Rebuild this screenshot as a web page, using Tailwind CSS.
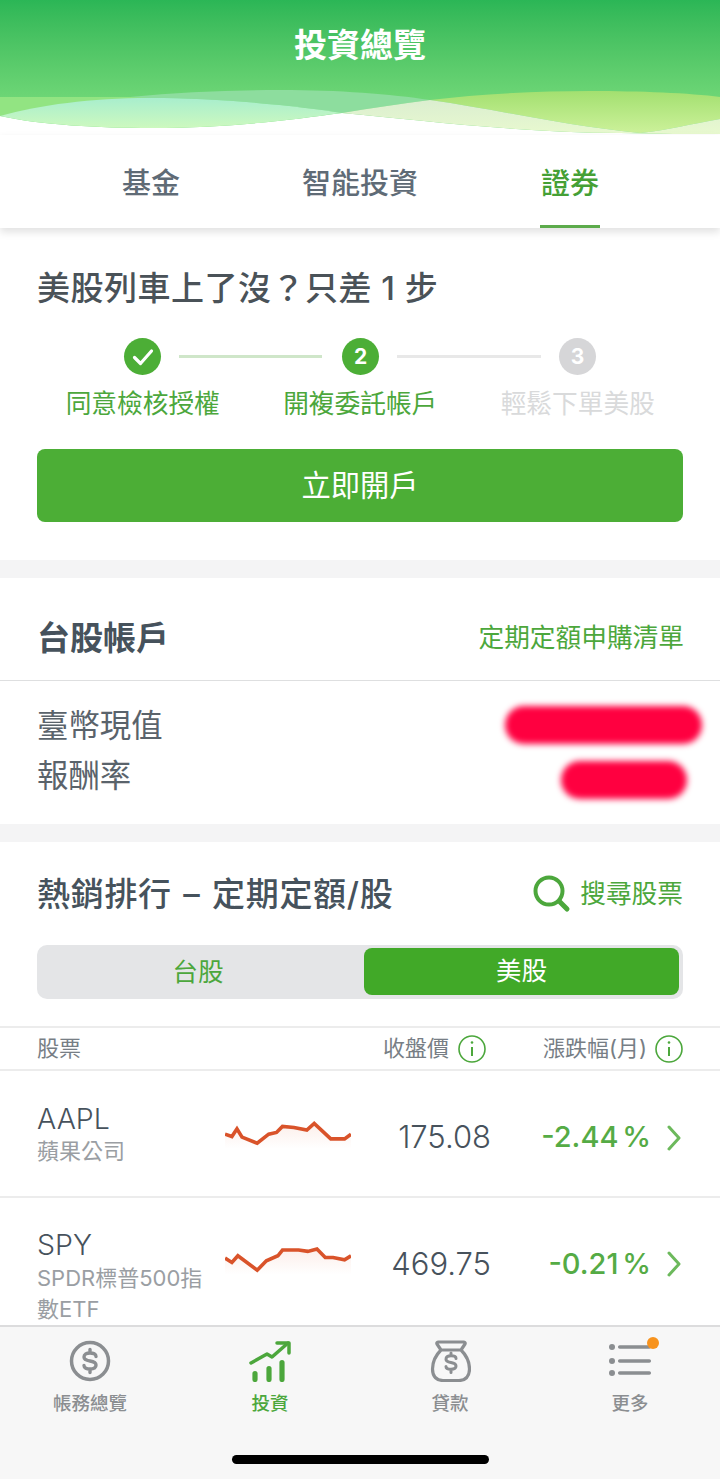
<!DOCTYPE html>
<html lang="zh-Hant">
<head>
<meta charset="utf-8">
<title>投資總覽</title>
<script src="https://cdn.jsdelivr.net/npm/@tailwindcss/browser@4"></script>
</head>
<body class="bg-white">
<div class="w-[720px] h-[1479px] flex flex-col overflow-hidden bg-white font-['Inter','Noto_Sans_CJK_TC',sans-serif] text-[#4a5560]">
  <main class="h-[1325px] shrink-0 overflow-hidden">
    <header class="relative h-[135px] bg-linear-to-b from-[#2bb656] to-[#6fd777] to-75%">
      <svg class="absolute inset-0" width="720" height="135" viewBox="0 0 720 135">
        <defs>
          <linearGradient id="lw" x1="0" y1="0" x2="0" y2="1"><stop offset="0" stop-color="#a8eecd"/><stop offset="1" stop-color="#cdf9bf"/></linearGradient>
          <linearGradient id="lm" x1="0" y1="0" x2="0" y2="1"><stop offset="0" stop-color="#a3e070"/><stop offset="1" stop-color="#ccf19a"/></linearGradient>
          <linearGradient id="lp" x1="0" y1="0" x2="0" y2="1"><stop offset="0" stop-color="#dbeed0"/><stop offset="1" stop-color="#e8f9cf"/></linearGradient>
        </defs>
        <path fill="#fff" d="M0 116C40 125 100 128 151 128C230 128 290 120 342 113C420 120 520 133 620 133C660 134 690 134 720 134V135H0Z"/>
        <path fill="#92e482" d="M0 97H170L0 116Z"/>
        <path fill="#8ddd9e" d="M130 97C180 92 230 90 280 90C340 90 390 94 430 100C400 104 370 108 342 113C300 106 220 98 150 98Z"/>
        <path fill="url(#lw)" d="M0 116C40 105 90 98 150 98C220 98 300 106 342 113C290 120 230 128 151 128C100 128 40 125 0 116Z"/>
        <path fill="url(#lm)" d="M430 100C480 94 540 91 590 91C640 91 690 93 720 97V119C690 124 670 130 640 133C560 125 500 110 430 100Z"/>
        <path fill="url(#lp)" d="M342 113C370 108 400 104 430 100C500 110 560 125 640 133C670 130 690 124 720 119V134C690 134 660 134 620 133C520 133 420 120 342 113Z"/>
      </svg>
      <h1 class="relative h-[91px] flex items-center justify-center text-[33px] font-bold text-white">投資總覽</h1>
    </header>

    <nav class="relative z-10 h-[93px] grid grid-cols-[300px_120px_300px] bg-white text-[29px] font-medium text-[#5f6b76] shadow-[0_4px_8px_rgba(0,0,0,0.12)]">
      <div class="flex items-center justify-center pt-[5px]"><span class="ml-[2px]">基金</span></div>
      <div class="flex items-center justify-center pt-[5px] whitespace-nowrap">智能投資</div>
      <div class="relative flex items-center justify-center pt-[5px] text-[#45a035]"><span>證券</span><span class="absolute left-[120px] bottom-0 w-[60px] h-[3px] bg-[#5cab4b]"></span></div>
    </nav>

    <section class="h-[332px] px-[37px] bg-white">
      <h2 class="h-[120px] pt-[1px] flex items-center text-[33px] font-medium text-[#4a5258] tracking-[0.5px] whitespace-nowrap">美股列車上了沒？只差 1 步</h2>
      <div class="flex items-center ml-[87px] h-[37px] -mt-[10px]">
        <span class="w-[37px] h-[37px] rounded-full bg-[#4cae36] flex items-center justify-center">
          <svg width="24" height="24" viewBox="0 0 24 24" fill="none" stroke="#fff" stroke-width="3.2" stroke-linecap="round" stroke-linejoin="round"><path d="M3.5 12.5L9.5 18.5L20.5 6"/></svg>
        </span>
        <span class="ml-[18px] w-[143px] h-[3px] bg-[#cfe6c9]"></span>
        <span class="ml-[20px] w-[37px] h-[37px] rounded-full bg-[#4cae36] flex items-center justify-center text-white text-[21px] font-bold">2</span>
        <span class="ml-[18px] w-[144px] h-[3px] bg-[#e8e8e8]"></span>
        <span class="ml-[18px] w-[37px] h-[37px] rounded-full bg-[#d6d6d8] flex items-center justify-center text-white text-[21px] font-bold">3</span>
      </div>
      <div class="grid grid-cols-[217.5px_217.5px_217.5px] -ml-[3px] mt-[10px] text-[25.7px] leading-[38px] text-center whitespace-nowrap">
        <span class="text-[#4ca73c]">同意檢核授權</span>
        <span class="text-[#4ca73c]">開複委託帳戶</span>
        <span class="text-[#d9dadb]">輕鬆下單美股</span>
      </div>
      <button class="mt-[26px] w-[646px] h-[73px] rounded-[8px] bg-[#4cae36] text-white text-[29.3px] font-normal">立即開戶</button>
    </section>

    <div class="h-[18px] bg-[#f4f4f5]"></div>

    <section class="bg-white">
      <div class="h-[103px] pl-[37px] pr-[36px] pt-[19px] flex items-center justify-between border-b border-[#dedfe0]">
        <h2 class="text-[33px] font-bold text-[#46525c]">台股帳戶</h2>
        <a class="text-[25.7px] text-[#4ca73c] whitespace-nowrap">定期定額申購清單</a>
      </div>
      <div class="h-[143px] pl-[37px] pr-[18px] pt-[20px] text-[31.4px] text-[#5a636b]">
        <div class="h-[50px] flex items-center justify-between"><span class="pt-[2px]">臺幣現值</span><span class="w-[197px] h-[38px] -mt-[2px] rounded-full bg-[#ff0040] blur-[3px]"></span></div>
        <div class="h-[50px] flex items-center justify-between"><span class="pt-[1px]">報酬率</span><span class="w-[126px] h-[38px] mt-[8px] mr-[15px] rounded-full bg-[#ff0040] blur-[3px]"></span></div>
      </div>
    </section>

    <div class="h-[18px] bg-[#f4f4f5]"></div>

    <section class="bg-white">
      <div class="h-[103px] pl-[37px] pr-[37px] pt-[2px] flex items-center justify-between">
        <h2 class="text-[33px] font-medium text-[#46525c] tracking-[0.7px] [word-spacing:2px] whitespace-nowrap">熱銷排行 – 定期定額/股</h2>
        <a class="flex items-center text-[25.7px] text-[#4ca73c]">
          <svg class="mr-[7px]" width="40" height="40" viewBox="0 0 40 40" fill="none" stroke="#4ca73c" stroke-width="4" stroke-linecap="round"><circle cx="16" cy="16" r="13.5"/><path stroke-width="5" d="M27 27L34 34"/></svg>
          搜尋股票
        </a>
      </div>
      <div class="mx-[37px] h-[54px] rounded-[10px] bg-[#e4e5e7] flex items-center text-[25.5px]">
        <span class="w-[322px] pt-[1px] text-center text-[#4ca73c]">台股</span>
        <span class="ml-[5px] w-[315px] h-[47px] -mt-[2px] rounded-[8px] bg-[#41a928] flex items-center justify-center pt-[1px] text-white">美股</span>
      </div>
      <div class="mt-[27px] h-[45px] pl-[37px] flex items-center border-y-2 border-[#ececec] text-[22px] text-[#777e85] whitespace-nowrap">
        <span class="w-[346px]">股票</span>
        <span>收盤價</span>
        <svg class="ml-[9px]" width="28" height="28" viewBox="0 0 28 28" fill="none" stroke="#4ca73c" stroke-width="1.6"><circle cx="14" cy="14" r="13"/><path d="M14 12V21" stroke-width="2"/><circle cx="14" cy="7.5" r="1.3" fill="#4ca73c" stroke="none"/></svg>
        <span class="ml-[57px]">漲跌幅(月)</span>
        <svg class="ml-[8px]" width="28" height="28" viewBox="0 0 28 28" fill="none" stroke="#4ca73c" stroke-width="1.6"><circle cx="14" cy="14" r="13"/><path d="M14 12V21" stroke-width="2"/><circle cx="14" cy="7.5" r="1.3" fill="#4ca73c" stroke="none"/></svg>
      </div>

      <div class="h-[127px] pl-[37px] flex border-b-2 border-[#ececec]">
        <div class="w-[188px] pt-[30px]">
          <div class="text-[28.5px] leading-[36px] font-light text-[#47525c]">AAPL</div>
          <div class="text-[22px] leading-[28px] text-[#9a9ea3]">蘋果公司</div>
        </div>
        <svg class="mt-[47px] shrink-0" width="126" height="37" viewBox="490 290 274 110" preserveAspectRatio="none">
          <defs><linearGradient id="fa" x1="0" y1="0" x2="0" y2="1"><stop offset="0" stop-color="#e2572a" stop-opacity=".1"/><stop offset=".8" stop-color="#e2572a" stop-opacity="0"/></linearGradient></defs>
          <path fill="url(#fa)" d="M490 338L505 345L516 322L527 347L560 365L585 338L602 333L615 315L640 318L668 326L684 306L720 352L750 352L764 338V400H490Z"/>
          <path fill="none" stroke="#d9532a" stroke-width="3.6" vector-effect="non-scaling-stroke" d="M490 338L505 345L516 322L527 347L560 365L585 338L602 333L615 315L640 318L668 326L684 306L720 352L750 352L764 338"/>
        </svg>
        <div class="w-[140px] h-[125px] pt-[8px] flex items-center justify-end text-[31px] font-light text-[#47525c]">175.08</div>
        <div class="w-[160px] h-[125px] pt-[6px] flex items-center justify-end text-[29px] font-medium text-[#55ab45] whitespace-nowrap [word-spacing:-4px]">-2.44 %</div>
        <svg class="ml-[16px] mt-[54px]" width="14" height="26" viewBox="0 0 14 26" fill="none" stroke="#6cb95c" stroke-width="3" stroke-linecap="round" stroke-linejoin="round"><path d="M2 2L12 13L2 24"/></svg>
      </div>

      <div class="h-[129px] pl-[37px] flex overflow-hidden">
        <div class="w-[188px] pt-[29px]">
          <div class="text-[28.5px] leading-[36px] font-light text-[#47525c]">SPY</div>
          <div class="w-[170px] text-[22px] leading-[31px] text-[#9a9ea3]">SPDR標普500指數ETF</div>
        </div>
        <svg class="mt-[46px] shrink-0" width="126" height="37" viewBox="490 670 274 110" preserveAspectRatio="none">
          <defs><linearGradient id="fb" x1="0" y1="0" x2="0" y2="1"><stop offset="0" stop-color="#e2572a" stop-opacity=".1"/><stop offset=".8" stop-color="#e2572a" stop-opacity="0"/></linearGradient></defs>
          <path fill="url(#fb)" d="M490 712L505 725L518 705L560 748L580 720L605 705L615 688L650 688L670 692L690 685L708 710L725 710L750 717L764 705V780H490Z"/>
          <path fill="none" stroke="#d9532a" stroke-width="3.6" vector-effect="non-scaling-stroke" d="M490 712L505 725L518 705L560 748L580 720L605 705L615 688L650 688L670 692L690 685L708 710L725 710L750 717L764 705"/>
        </svg>
        <div class="w-[140px] h-[125px] pt-[8px] flex items-center justify-end text-[31px] font-light text-[#47525c]">469.75</div>
        <div class="w-[160px] h-[125px] pt-[7px] flex items-center justify-end text-[29px] font-medium text-[#55ab45] whitespace-nowrap [word-spacing:-4px]">-0.21 %</div>
        <svg class="ml-[16px] mt-[53px]" width="14" height="26" viewBox="0 0 14 26" fill="none" stroke="#6cb95c" stroke-width="3" stroke-linecap="round" stroke-linejoin="round"><path d="M2 2L12 13L2 24"/></svg>
      </div>
    </section>
  </main>

  <footer class="relative h-[154px] shrink-0 bg-[#f7f7f7] border-t-2 border-[#dcdcdd]">
    <div class="grid grid-cols-4 text-[18.5px] font-medium text-[#8b8e91] text-center">
      <a class="flex flex-col items-center pt-[13px]">
        <svg width="42" height="42" viewBox="0 0 42 42" fill="none" stroke="#8b8e91"><circle cx="21" cy="21" r="18.5" stroke-width="3.5"/><path stroke-width="3.4" stroke-linecap="round" d="M27 16.5C27 14 24.5 13 21 13C17.5 13 15 14.2 15 17C15 23 27 19 27 25C27 28 24.5 29 21 29C17.5 29 15 28 15 25.5M21 9.5V13M21 29V32.5"/></svg>
        <span class="mt-[7px] leading-[28px]">帳務總覽</span>
      </a>
      <a class="flex flex-col items-center pt-[13px] text-[#4ca73c]">
        <svg width="42" height="42" viewBox="0 0 42 42" fill="none" stroke="#4ca73c" stroke-linecap="round" stroke-linejoin="round"><path stroke-width="3.5" d="M2 23L18 14L23 17L39 3"/><path stroke-width="3.5" d="M28 3H40V13"/><path stroke-width="5.2" d="M6 33.5V39.5M20 28.5V39.5M33 22.5V39.5"/></svg>
        <span class="mt-[7px] leading-[28px]">投資</span>
      </a>
      <a class="flex flex-col items-center pt-[13px]">
        <svg width="42" height="42" viewBox="0 0 42 42" fill="none" stroke="#8b8e91" stroke-linejoin="round"><path stroke-width="3.2" d="M9 2H35C36 2 36.5 3 36 4L32 10C37 15 40.5 21 40.5 29C40.5 37 36 40.5 30 40.5H14C8 40.5 3.5 37 3.5 29C3.5 21 7 15 12 10L8 4C7.5 3 8 2 9 2ZM12 10H32"/><path stroke-width="3" stroke-linecap="round" d="M27 18.5C27 16.5 25 15.8 22 15.8C19 15.8 17 16.8 17 19.2C17 24 27 21 27 26C27 28.5 25 29.2 22 29.2C19 29.2 17 28.4 17 26.4M22 13V15.8M22 29.2V32.5"/></svg>
        <span class="mt-[7px] leading-[28px]">貸款</span>
      </a>
      <a class="relative flex flex-col items-center pt-[13px]">
        <svg width="46" height="42" viewBox="0 0 46 42" fill="none" stroke="#8b8e91" stroke-linecap="round"><path stroke-width="3.5" d="M12.7 7H42.3M12.7 21H42.3M12.7 33H42.3"/><circle cx="5" cy="7" r="3" fill="#8b8e91" stroke="none"/><circle cx="5" cy="21" r="3" fill="#8b8e91" stroke="none"/><circle cx="5" cy="33" r="3" fill="#8b8e91" stroke="none"/></svg>
        <span class="absolute left-[107px] top-[10px] w-[12px] h-[12px] rounded-full bg-[#f7931e]"></span>
        <span class="mt-[7px] leading-[28px]">更多</span>
      </a>
    </div>
    <div class="absolute left-[232px] top-[128px] w-[257px] h-[9px] rounded-full bg-black"></div>
  </footer>
</div>
</body>
</html>
